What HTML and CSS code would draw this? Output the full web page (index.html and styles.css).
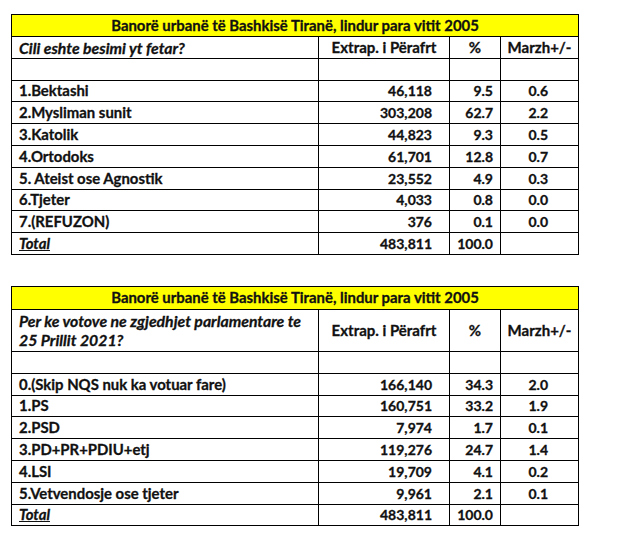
FILE: index.html
```html
<!DOCTYPE html>
<html lang="sq">
<head>
<meta charset="utf-8">
<link rel="stylesheet" href="styles.css">
</head>
<body>
<div class="page">
<table class="grid">
  <colgroup><col class="c1"><col class="c2"><col class="c3"><col class="c4"></colgroup>
  <tr class="title"><td colspan="4">Banorë urbanë të Bashkisë Tiranë, lindur para vitit 2005</td></tr>
  <tr class="head"><td class="q">Cili eshte besimi yt fetar?</td><td class="hc">Extrap. i Përafrt</td><td class="hc">%</td><td class="hc">Marzh+/-</td></tr>
  <tr><td></td><td></td><td></td><td></td></tr>
  <tr><td>1.Bektashi</td><td class="n">46,118</td><td class="p">9.5</td><td class="m">0.6</td></tr>
  <tr><td>2.Mysliman sunit</td><td class="n">303,208</td><td class="p">62.7</td><td class="m">2.2</td></tr>
  <tr><td>3.Katolik</td><td class="n">44,823</td><td class="p">9.3</td><td class="m">0.5</td></tr>
  <tr><td>4.Ortodoks</td><td class="n">61,701</td><td class="p">12.8</td><td class="m">0.7</td></tr>
  <tr><td>5. Ateist ose Agnostik</td><td class="n">23,552</td><td class="p">4.9</td><td class="m">0.3</td></tr>
  <tr><td>6.Tjeter</td><td class="n">4,033</td><td class="p">0.8</td><td class="m">0.0</td></tr>
  <tr><td>7.(REFUZON)</td><td class="n">376</td><td class="p">0.1</td><td class="m">0.0</td></tr>
  <tr><td class="tot">Total</td><td class="n">483,811</td><td class="p">100.0</td><td class="m"></td></tr>
</table>

<table class="grid second">
  <colgroup><col class="c1"><col class="c2"><col class="c3"><col class="c4"></colgroup>
  <tr class="title t2"><td colspan="4">Banorë urbanë të Bashkisë Tiranë, lindur para vitit 2005</td></tr>
  <tr class="head tall"><td class="q">Per ke votove ne zgjedhjet parlamentare te<br>25 Prillit 2021?</td><td class="hc">Extrap. i Përafrt</td><td class="hc">%</td><td class="hc">Marzh+/-</td></tr>
  <tr><td></td><td></td><td></td><td></td></tr>
  <tr><td>0.(Skip NQS nuk ka votuar fare)</td><td class="n">166,140</td><td class="p">34.3</td><td class="m">2.0</td></tr>
  <tr><td>1.PS</td><td class="n">160,751</td><td class="p">33.2</td><td class="m">1.9</td></tr>
  <tr><td>2.PSD</td><td class="n">7,974</td><td class="p">1.7</td><td class="m">0.1</td></tr>
  <tr><td>3.PD+PR+PDIU+etj</td><td class="n">119,276</td><td class="p">24.7</td><td class="m">1.4</td></tr>
  <tr><td>4.LSI</td><td class="n">19,709</td><td class="p">4.1</td><td class="m">0.2</td></tr>
  <tr><td>5.Vetvendosje ose tjeter</td><td class="n">9,961</td><td class="p">2.1</td><td class="m">0.1</td></tr>
  <tr><td class="tot">Total</td><td class="n">483,811</td><td class="p">100.0</td><td class="m"></td></tr>
</table>
</div>
</body>
</html>
```
FILE: styles.css
```css
html, body {
  margin: 0;
  padding: 0;
  background: #ffffff;
}
.page {
  padding: 14px 0 0 11px;
  font-family: Lato, "Liberation Sans", sans-serif;
  font-weight: 700;
  font-size: 14.9px;
  color: #111111;
  -webkit-text-stroke: 0.3px #111111;
}
.grid {
  border-collapse: collapse;
  table-layout: fixed;
  width: 567px;
}
.grid.second {
  margin-top: 31px;
}
.c1 { width: 307px; }
.c2 { width: 131px; }
.c3 { width: 51px; }
.c4 { width: 78px; }
.grid td {
  border: 1px solid #000000;
  height: 20.8px;
  padding: 0 0 0 7px;
  line-height: 17px;
  vertical-align: middle;
  white-space: nowrap;
  overflow: hidden;
}
.grid tr.title td {
  background: #ffff00;
  text-align: center;
  padding: 0;
  height: 21px;
}
.grid tr.title.t2 td {
  height: 21.7px;
}
.grid .q {
  font-style: italic;
  font-size: 15.8px;
}
.grid tr.tall td {
  height: 41.3px;
}
.grid tr.tall td.q {
  line-height: 19.7px;
}
.grid .hc {
  text-align: center;
  padding: 0;
  font-size: 15px;
}
.grid .n,
.grid .p,
.grid .m {
  text-align: right;
  font-size: 14px;
}
.grid .n {
  padding: 0 17px 0 0;
}
.grid .p {
  padding: 0 7px 0 0;
}
.grid .m {
  padding: 0 30px 0 0;
}
.grid .tot {
  font-style: italic;
  text-decoration: underline;
}
```
